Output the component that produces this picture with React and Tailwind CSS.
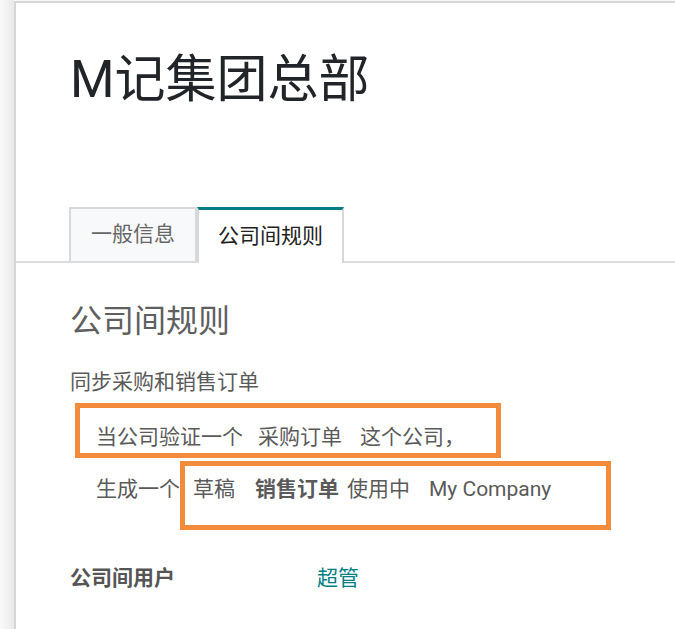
import React from "react";

export default function App() {
  const font = { fontFamily: 'Roboto, "Noto Sans CJK SC", sans-serif' };
  return (
    <div
      className="relative flex w-[675px] h-[629px] overflow-hidden bg-[#f7f7f7]"
      style={font}
    >
      <div className="w-[14px] h-full bg-gradient-to-r from-[#fafafa] to-[#e9e9e9]" />
      <div className="flex-1 mt-[1px] bg-white border-l-2 border-t-2 border-[#d6d6d6] flex flex-col">
        <div className="pl-[54px] pt-[47px] h-[204px]">
          <h1 className="text-[51px] leading-[60px] text-[#212529] font-normal">
            M记集团总部
          </h1>
        </div>
        <div className="flex items-end pl-[53px] border-b-2 border-[#dcdcdc] h-[56px]">
          <div className="h-[54px] flex items-center px-[20px] bg-[#f8f9fa] border-2 border-b-0 border-[#d8d8d8] text-[21px] text-[#666]">
            一般信息
          </div>
          <div className="h-[56px] -mb-[2px] flex items-center px-[19px] bg-white border-x-2 border-[#d8d8d8] border-t-[3px] border-t-[#017e84] text-[21px] text-[#222]">
            公司间规则
          </div>
        </div>
        <div className="pl-[54px] pt-[38px] text-[#555]">
          <h2 className="text-[32px] leading-[40px] text-[#5f5f5f] font-normal">
            公司间规则
          </h2>
          <div className="mt-[26px] text-[21px] leading-[30px] text-[#5a5a5a]">
            同步采购和销售订单
          </div>
          <div className="mt-[25px] pl-[26px] flex text-[21px] leading-[30px] text-[#5a5a5a] whitespace-nowrap">
            <span>当公司验证一个</span>
            <span className="ml-[15px]">采购订单</span>
            <span className="ml-[18px]">这个公司，</span>
          </div>
          <div className="mt-[22px] pl-[26px] flex text-[21px] leading-[30px] text-[#5a5a5a] whitespace-nowrap">
            <span>生成一个</span>
            <span className="ml-[13px]">草稿</span>
            <span className="ml-[20px] font-bold">销售订单</span>
            <span className="ml-[8px]">使用中</span>
            <span className="ml-[19px]">My Company</span>
          </div>
          <div className="mt-[59px] flex text-[21px] leading-[30px] whitespace-nowrap">
            <span className="w-[247px] font-bold text-[#555]">公司间用户</span>
            <span className="text-[#017e84]">超管</span>
          </div>
        </div>
      </div>
      <div className="absolute left-[75px] top-[403px] w-[426px] h-[55px] border-[5px] border-[#f28b3b]" />
      <div className="absolute left-[180px] top-[461px] w-[431px] h-[69px] border-[5px] border-[#f28b3b]" />
    </div>
  );
}
